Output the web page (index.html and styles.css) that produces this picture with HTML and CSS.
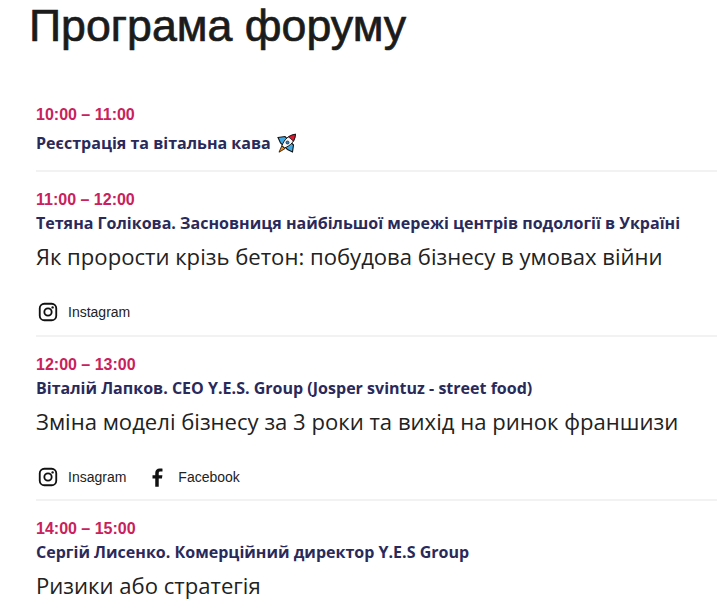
FILE: index.html
```html
<!DOCTYPE html>
<html lang="uk">
<head>
<meta charset="utf-8">
<title>Програма форуму</title>
<link rel="stylesheet" href="styles.css">
</head>
<body>
<main class="page">
  <h1 class="title">Програма форуму</h1>
  <section class="schedule">
    <article class="slot slot-first">
      <div class="time">10:00 – 11:00</div>
      <div class="speaker speaker-first">Реєстрація та вітальна кава
        <svg class="rocket" viewBox="0 0 20 20" width="20" height="20" aria-hidden="true">
          <path d="M1 4.500 8 3.500 16.500 12l-1 7-5-2.500L3.500 10z" fill="#3fa9e6" stroke="#111" stroke-width="1.100"/>
          <path d="M5 12.500C7.500 6 11.500 2.500 18.500 1.200 18 8 14 12.500 7.500 15z" fill="#f6f6f6" stroke="#111" stroke-width="1"/>
          <path d="M11.500 3.800c2-1.300 4.300-2.100 7-2.600-.3 2.700-.9 5-2 7z" fill="#e3142d" stroke="#111" stroke-width=".8"/>
          <circle cx="10.500" cy="9.500" r="1.500" fill="#2d86cf" stroke="#111" stroke-width=".7"/>
          <path d="M4.800 12.800l3 3L2 19.200z" fill="#f28a12" stroke="#111" stroke-width=".8"/>
        </svg>
      </div>
    </article>
    <article class="slot">
      <div class="time">11:00 – 12:00</div>
      <div class="speaker">Тетяна Голікова. Засновниця найбільшої мережі центрів подології в Україні</div>
      <div class="talk">Як прорости крізь бетон: побудова бізнесу в умовах війни</div>
      <div class="links">
        <a class="link" href="#">
          <svg class="icon" viewBox="0 0 24 24" aria-hidden="true"><rect x="3" y="3" width="18" height="18" rx="5" fill="none" stroke="#111" stroke-width="2"/><circle cx="12" cy="12" r="4" fill="none" stroke="#111" stroke-width="2"/><circle cx="17" cy="7" r="1.300" fill="#111"/></svg>
          Instagram
        </a>
      </div>
    </article>
    <article class="slot">
      <div class="time">12:00 – 13:00</div>
      <div class="speaker">Віталій Лапков. CEO Y.E.S. Group (Josper svintuz - street food)</div>
      <div class="talk">Зміна моделі бізнесу за 3 роки та вихід на ринок франшизи</div>
      <div class="links">
        <a class="link" href="#">
          <svg class="icon" viewBox="0 0 24 24" aria-hidden="true"><rect x="3" y="3" width="18" height="18" rx="5" fill="none" stroke="#111" stroke-width="2"/><circle cx="12" cy="12" r="4" fill="none" stroke="#111" stroke-width="2"/><circle cx="17" cy="7" r="1.300" fill="#111"/></svg>
          Insagram
        </a>
        <a class="link" href="#">
          <svg class="icon" viewBox="0 0 24 24" aria-hidden="true"><path d="M12.800 22.500v-9h3.500l.5-3.500h-4V7.800c0-1 .4-1.700 1.900-1.700h2.200V2.900c-.5-.1-1.600-.2-3-.2-3 0-4.900 1.800-4.900 4.800V10H6v3.500h3v9z" fill="#111"/></svg>
          Facebook
        </a>
      </div>
    </article>
    <article class="slot slot-last">
      <div class="time">14:00 – 15:00</div>
      <div class="speaker">Сергій Лисенко. Комерційний директор Y.E.S Group</div>
      <div class="talk">Ризики або стратегія</div>
    </article>
  </section>
</main>
</body>
</html>
```
FILE: styles.css
```css
* { box-sizing: border-box; }
html, body { margin: 0; padding: 0; background: #fff; overflow: hidden; }
body { height: 612px; }
.page { padding-left: 29px; }
.title {
  margin: 0;
  height: 92px;
  font: 500 44.7px/51px "Liberation Sans", Arial, sans-serif;
  color: #1b1b1b;
  -webkit-text-stroke: 0.7px #1b1b1b;
}
.schedule { padding-left: 7px; }
.slot { border-bottom: 2px solid #f2f2f2; padding: 16px 0 11.500px; }
.slot-first { padding: 11px 0 0; height: 80px; }
.slot-last { border-bottom: 0; }
.time { font: 700 16px/24px "Liberation Sans", Arial, sans-serif; color: #c9215c; }
.speaker { margin-top: -1px; font: 700 16.050px/24px "Open Sans", sans-serif; color: #2a2a5a; }
.speaker-first { margin-top: 4px; display: flex; align-items: center; gap: 6px; }
.rocket { flex: none; }
.talk { margin-top: 6px; font: 400 22.100px/30px "Open Sans", sans-serif; color: #222; }
.links { display: flex; gap: 20px; margin-top: 30px; }
.link { display: flex; align-items: center; gap: 9px; font: 400 14px/20px "Liberation Sans", Arial, sans-serif; color: #222; text-decoration: none; }
.icon { width: 22px; height: 22px; flex: none; margin-left: 1px; }
```
